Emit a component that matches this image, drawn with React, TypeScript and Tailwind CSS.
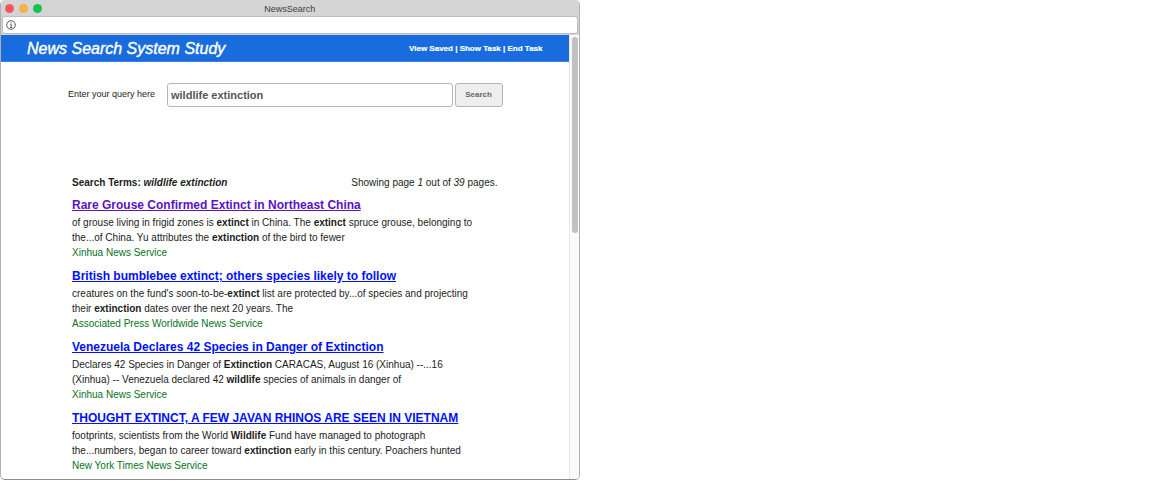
import { Fragment, useState } from 'react';

type Result = { title: string; lines: string[]; source: string; visited?: boolean };

// Words wrapped in asterisks are matched search terms.
const results: Result[] = [
  {
    title: 'Rare Grouse Confirmed Extinct in Northeast China',
    lines: [
      'of grouse living in frigid zones is *extinct* in China. The *extinct* spruce grouse, belonging to',
      'the...of China. Yu attributes the *extinction* of the bird to fewer',
    ],
    source: 'Xinhua News Service',
    visited: true,
  },
  {
    title: 'British bumblebee extinct; others species likely to follow',
    lines: [
      "creatures on the fund's soon-to-be-*extinct* list are protected by...of species and projecting",
      'their *extinction* dates over the next 20 years. The',
    ],
    source: 'Associated Press Worldwide News Service',
  },
  {
    title: 'Venezuela Declares 42 Species in Danger of Extinction',
    lines: [
      'Declares 42 Species in Danger of *Extinction* CARACAS, August 16 (Xinhua) --...16',
      '(Xinhua) -- Venezuela declared 42 *wildlife* species of animals in danger of',
    ],
    source: 'Xinhua News Service',
  },
  {
    title: 'THOUGHT EXTINCT, A FEW JAVAN RHINOS ARE SEEN IN VIETNAM',
    lines: [
      'footprints, scientists from the World *Wildlife* Fund have managed to photograph',
      'the...numbers, began to career toward *extinction* early in this century. Poachers hunted',
    ],
    source: 'New York Times News Service',
  },
];

function Marked({ text }: { text: string }) {
  return (
    <>
      {text.split('*').map((part, i) =>
        i % 2 ? <b key={i}>{part}</b> : <Fragment key={i}>{part}</Fragment>,
      )}
    </>
  );
}

function TitleBar() {
  return (
    <div className="grid h-4 grid-cols-[1fr_auto_1fr] items-center bg-[#d4d4d4] px-1">
      <div className="flex gap-[5px]">
        <span className="size-[9px] rounded-full border border-[#f0575c] bg-[#fc5459]" />
        <span className="size-[9px] rounded-full border border-[#f0ab42] bg-[#fdb43e]" />
        <span className="size-[9px] rounded-full border border-[#10b945] bg-[#08cb4d]" />
      </div>
      <span className="pt-[2px] text-[9px] leading-[14px] text-[#404040]">NewsSearch</span>
    </div>
  );
}

function AddressBar() {
  return (
    <div className="flex h-[19px] bg-[#d4d4d4] px-px pb-px">
      <div className="flex flex-1 items-center rounded-[3px] border border-[#bcbcbc] bg-white px-[3px]">
        <svg viewBox="0 0 10 10" className="size-[10px]" fill="none" stroke="#4a4a4a" aria-hidden="true">
          <circle cx="5" cy="5" r="4.3" strokeWidth="0.9" />
          <path d="M4.2 4.4h1v3.1M4 7.5h2.2" strokeWidth="0.9" />
          <circle cx="5" cy="2.8" r="0.6" fill="#4a4a4a" stroke="none" />
        </svg>
      </div>
    </div>
  );
}

export default function App() {
  const [query, setQuery] = useState('wildlife extinction');
  return (
    <div className="min-h-screen bg-white font-['Liberation_Sans',Arial,sans-serif] text-[10px] text-[#1c1c1c]">
      <div className="w-1/2 overflow-hidden rounded-[5px] border border-t-0 border-[#b0b0b0] border-b-[#8c8c8c]">
        <TitleBar />
        <AddressBar />
        <div className="flex">
          <div className="min-w-0 flex-1">
            <header className="flex h-[27px] items-center justify-between border-b border-[#3b7fe0] bg-[#186cdd] pt-[2px] pr-[26px] pl-[26px] text-white">
              <h1 className="text-base italic [-webkit-text-stroke:0.4px_white]">News Search System Study</h1>
              <nav className="text-[8px] font-bold [-webkit-text-stroke:0.2px_white]">
                <a href="#saved">View Saved</a> | <a href="#task">Show Task</a> | <a href="#end">End Task</a>
              </nav>
            </header>
            <main className="pr-[66px] pb-[5px] pl-[67px]">
              <form className="mt-[21px] flex h-6 items-center" onSubmit={(e) => e.preventDefault()}>
                <label htmlFor="query" className="w-[99px] text-[9px] whitespace-nowrap">Enter your query here</label>
                <input
                  id="query"
                  value={query}
                  onChange={(e) => setQuery(e.target.value)}
                  className="h-6 min-w-0 flex-1 rounded-[3px] border border-[#b5b5b5] bg-white px-[3px] text-[11px] font-bold text-[#555555]"
                />
                <button
                  type="submit"
                  className="ml-[2px] h-6 w-12 rounded-[3px] border border-[#b5b5b5] bg-[#eeeeee] text-[8px] font-bold text-[#666666]"
                >
                  Search
                </button>
              </form>
              <div className="mt-[68px] flex justify-between pr-[5px] pl-1 leading-[15px]">
                <p className="font-bold">Search Terms: <i>wildlife extinction</i></p>
                <p>Showing page <i>1</i> out of <i>39</i> pages.</p>
              </div>
              <div className="mt-[6px] flex flex-col gap-[6px] pl-1">
                {results.map((r) => (
                  <article key={r.title}>
                    <h2 className="mb-px text-xs leading-[18px] font-bold">
                      <a
                        href="#result"
                        className={r.visited ? 'text-[#5a12c4] underline' : 'text-[#0010fa] underline'}
                      >
                        {r.title}
                      </a>
                    </h2>
                    {r.lines.map((line) => (
                      <p key={line} className="leading-[15px]"><Marked text={line} /></p>
                    ))}
                    <p className="leading-4 text-[#067321]">{r.source}</p>
                  </article>
                ))}
              </div>
            </main>
          </div>
          <div className="w-[10px] border-l border-[#e8e8e8] bg-[#fafafa] pt-[2px] pr-px pl-[2px]">
            <div className="h-[196px] rounded-full bg-[#c1c1c1]" />
          </div>
        </div>
      </div>
    </div>
  );
}
